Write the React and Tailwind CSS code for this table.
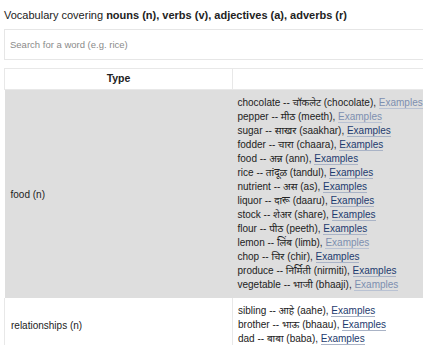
import React from 'react'

const food = [
  ['chocolate', 'चॉकलेट', 'chocolate', true],
  ['pepper', 'मीठ', 'meeth', true],
  ['sugar', 'साखर', 'saakhar', false],
  ['fodder', 'चारा', 'chaara', false],
  ['food', 'अन्न', 'ann', false],
  ['rice', 'तांदूळ', 'tandul', false],
  ['nutrient', 'अस', 'as', false],
  ['liquor', 'दारू', 'daaru', false],
  ['stock', 'शेअर', 'share', false],
  ['flour', 'पीठ', 'peeth', false],
  ['lemon', 'लिंब', 'limb', true],
  ['chop', 'चिर', 'chir', false],
  ['produce', 'निर्मिती', 'nirmiti', false],
  ['vegetable', 'भाजी', 'bhaaji', true],
]

const relationships = [
  ['sibling', 'आहे', 'aahe', false],
  ['brother', 'भाऊ', 'bhaau', false],
  ['dad', 'बाबा', 'baba', false],
]

const WordList = ({ words }) => (
  <div className="flex flex-col">
    {words.map(([en, mr, tr, visited]) => (
      <div key={en} className="h-[14px] leading-[14px] whitespace-nowrap">
        {en} -- {mr} ({tr}),{' '}
        <a
          href="#"
          className={
            visited
              ? 'text-[#7d8fb0] border-b border-[#b9c2d3]'
              : 'text-[#1d3b6e] border-b border-[#a9b3c6]'
          }
        >
          Examples
        </a>
      </div>
    ))}
  </div>
)

export default function App() {
  return (
    <div className="w-[423px] h-[345px] overflow-hidden bg-white text-[#222] font-['Liberation_Sans','Noto_Sans',sans-serif]">
      <div className="pl-1 pt-[8px]">
        <h1 className="text-[11px] leading-[14px]">
          Vocabulary covering <b>nouns (n), verbs (v), adjectives (a), adverbs (r)</b>
        </h1>
        <input
          type="text"
          placeholder="Search for a word (e.g. rice)"
          className="mt-[7px] w-[440px] h-[31px] border border-[#e6e6e6] px-[5px] text-[9.5px] placeholder:text-[#8a8a8a] outline-none"
        />
        <table className="mt-[8px] w-[520px] border-collapse text-[10px]">
          <thead>
            <tr className="h-[21px]">
              <th className="w-[228px] border border-[#e8e8e8] font-bold text-[10.5px] text-center">Type</th>
              <th className="border border-[#e8e8e8]"></th>
            </tr>
          </thead>
          <tbody>
            <tr className="bg-[#dedede] border-b border-white">
              <td className="pl-[6px] align-middle">food (n)</td>
              <td className="pl-[5px] pt-[6px] pb-[6px]">
                <WordList words={food} />
              </td>
            </tr>
            <tr>
              <td className="pl-[6px] align-middle border-l border-[#e8e8e8]">relationships (n)</td>
              <td className="pl-[5px] pt-[5px] pb-[5px] border-l border-[#e8e8e8]">
                <WordList words={relationships} />
              </td>
            </tr>
          </tbody>
        </table>
      </div>
    </div>
  )
}
